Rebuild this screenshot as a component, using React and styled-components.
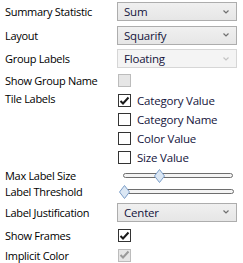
import React from 'react';
import styled, { createGlobalStyle } from 'styled-components';

const GlobalStyle = createGlobalStyle`
  html, body {
    margin: 0;
    padding: 0;
    background: #ffffff;
  }
  body {
    font-family: 'Open Sans', 'Noto Sans', sans-serif;
    font-size: 11px;
    letter-spacing: -0.3px;
    color: #000;
  }
`;

const Panel = styled.div`
  width: 243px;
  display: flex;
  flex-direction: column;
`;

const Row = styled.div`
  display: grid;
  grid-template-columns: 117px 1fr;
  align-items: ${({ $top }) => ($top ? 'start' : 'center')};
  height: ${({ $h }) => $h}px;
`;

const Label = styled.div`
  padding-left: 5px;
  white-space: nowrap;
  line-height: 15px;
  padding-top: ${({ $pt }) => $pt || 0}px;
`;

const Select = styled.div`
  box-sizing: border-box;
  width: 120px;
  height: 19px;
  display: flex;
  align-items: center;
  justify-content: space-between;
  padding: 0 7px 0 6px;
  border: 1px solid ${({ $disabled }) => ($disabled ? '#d6d6d6' : '#adadad')};
  background: ${({ $disabled }) =>
    $disabled ? '#f4f4f4' : 'linear-gradient(#f0f0f0, #e6e6e6)'};
  color: #14143c;
  font-size: 11.5px;
  letter-spacing: -0.2px;
`;

const Chevron = ({ disabled }) => (
  <svg width="6" height="4" viewBox="0 0 6 4">
    <path d="M0.5 0.5 L3 3 L5.5 0.5" fill="none" stroke={disabled ? '#c4c4c4' : '#707070'} strokeWidth="1.2" />
  </svg>
);

const Box = styled.div`
  box-sizing: border-box;
  width: 13px;
  height: 13px;
  margin-left: 1px;
  flex: none;
  display: flex;
  align-items: center;
  justify-content: center;
  border: 1px solid ${({ $disabled }) => ($disabled ? '#bcbcbc' : '#333333')};
  background: ${({ $disabled }) => ($disabled ? '#e6e6e6' : '#ffffff')};
`;

const Check = ({ color }) => (
  <svg width="11" height="10" viewBox="0 0 11 10">
    <path d="M1.5 5 L4 7.5 L9.5 1.5" fill="none" stroke={color} strokeWidth="2" />
  </svg>
);

const CheckBox = ({ checked, disabled }) => (
  <Box $disabled={disabled}>
    {checked && <Check color={disabled ? '#9a9a9a' : '#1a1a1a'} />}
  </Box>
);

const Options = styled.div`
  display: flex;
  flex-direction: column;
`;

const Option = styled.div`
  height: 19px;
  display: flex;
  align-items: center;
  gap: 6px;
  font-size: 11.5px;
  letter-spacing: -0.2px;
  color: #14143c;
`;

const Track = styled.div`
  position: relative;
  box-sizing: border-box;
  width: 110px;
  height: 5px;
  margin-left: ${({ $ml }) => $ml}px;
  border: 1px solid #6e6e6e;
  border-radius: 3px;
  background: #f4f4f4;
`;

const Thumb = styled.svg`
  position: absolute;
  top: -5px;
  left: ${({ $x }) => $x}px;
`;

const Slider = ({ x, ml }) => (
  <Track $ml={ml}>
    <Thumb $x={x} width="11" height="14" viewBox="0 0 11 14">
      <path d="M5.5 0.5 L10.5 7 L5.5 13.5 L0.5 7 Z" fill="#dbe7f4" stroke="#7c9ec8" strokeWidth="1" />
    </Thumb>
  </Track>
);

export default function App() {
  return (
    <>
      <GlobalStyle />
      <Panel>
        <Row $h={23}>
          <Label>Summary Statistic</Label>
          <Select>Sum<Chevron /></Select>
        </Row>
        <Row $h={24}>
          <Label>Layout</Label>
          <Select>Squarify<Chevron /></Select>
        </Row>
        <Row $h={23}>
          <Label>Group Labels</Label>
          <Select $disabled>Floating<Chevron disabled /></Select>
        </Row>
        <Row $h={21}>
          <Label>Show Group Name</Label>
          <Box $disabled />
        </Row>
        <Row $h={76} $top>
          <Label $pt={0}>Tile Labels</Label>
          <Options>
            <Option><CheckBox checked />Category Value</Option>
            <Option><CheckBox />Category Name</Option>
            <Option><CheckBox />Color Value</Option>
            <Option><CheckBox />Size Value</Option>
          </Options>
        </Row>
        <Row $h={16}>
          <Label>Max Label Size</Label>
          <Slider ml={6} x={30} />
        </Row>
        <Row $h={17}>
          <Label>Label Threshold</Label>
          <Slider ml={7} x={-6} />
        </Row>
        <Row $h={24}>
          <Label>Label Justification</Label>
          <Select>Center<Chevron /></Select>
        </Row>
        <Row $h={23}>
          <Label>Show Frames</Label>
          <CheckBox checked />
        </Row>
        <Row $h={16}>
          <Label>Implicit Color</Label>
          <CheckBox checked disabled />
        </Row>
      </Panel>
    </>
  );
}
